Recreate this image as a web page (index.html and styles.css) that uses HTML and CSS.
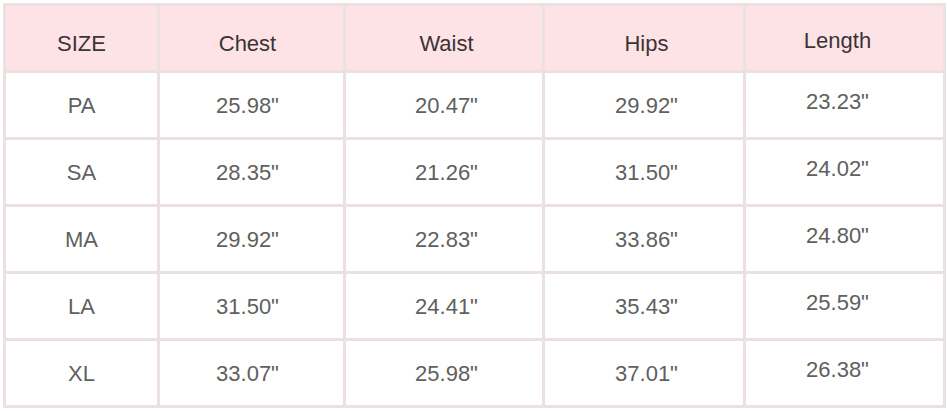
FILE: index.html
```html
<!DOCTYPE html>
<html>
<head>
<meta charset="utf-8">
<link rel="stylesheet" href="styles.css">
</head>
<body>
<div class="wrap">
<table class="size-table">
  <colgroup>
    <col class="c1"><col class="c2"><col class="c3"><col class="c4"><col class="c5">
  </colgroup>
  <thead>
    <tr><th>SIZE</th><th class="k2">Chest</th><th class="k3">Waist</th><th class="k4">Hips</th><th class="k5">Length</th></tr>
  </thead>
  <tbody>
    <tr><td>PA</td><td class="k2">25.98"</td><td class="k3">20.47"</td><td class="k4">29.92"</td><td class="k5">23.23"</td></tr>
    <tr><td>SA</td><td class="k2">28.35"</td><td class="k3">21.26"</td><td class="k4">31.50"</td><td class="k5">24.02"</td></tr>
    <tr><td>MA</td><td class="k2">29.92"</td><td class="k3">22.83"</td><td class="k4">33.86"</td><td class="k5">24.80"</td></tr>
    <tr><td>LA</td><td class="k2">31.50"</td><td class="k3">24.41"</td><td class="k4">35.43"</td><td class="k5">25.59"</td></tr>
    <tr><td>XL</td><td class="k2">33.07"</td><td class="k3">25.98"</td><td class="k4">37.01"</td><td class="k5">26.38"</td></tr>
  </tbody>
</table>
</div>
</body>
</html>
```
FILE: styles.css
```css
html, body {
  margin: 0;
  padding: 0;
  background: #ffffff;
}
.wrap {
  padding: 3px 0 0 3px;
}
.size-table {
  border-collapse: collapse;
  table-layout: fixed;
  width: 940px;
  font-family: "Liberation Sans", Arial, sans-serif;
  font-size: 22px;
}
.c1 { width: 154px; }
.c2 { width: 186px; }
.c3 { width: 199px; }
.c4 { width: 201px; }
.c5 { width: 200px; }
.size-table th,
.size-table td {
  border: 3px solid #ebe1e1;
  height: 67px;
  padding: 0;
  text-align: center;
  vertical-align: middle;
  box-sizing: border-box;
}
.size-table th {
  background: #fde3e6;
  color: #3b3335;
  font-weight: normal;
  padding-top: 12px;
}
.size-table td {
  color: #606060;
  padding-top: 1px;
}
.size-table .k2 {
  padding-right: 8px;
}
.size-table .k3,
.size-table .k4 {
  padding-left: 5px;
}
.size-table .k5 {
  padding-right: 14px;
}
.size-table th.k5 {
  padding-top: 6px;
}
.size-table td.k5 {
  padding-top: 0;
  padding-bottom: 7px;
}
```
